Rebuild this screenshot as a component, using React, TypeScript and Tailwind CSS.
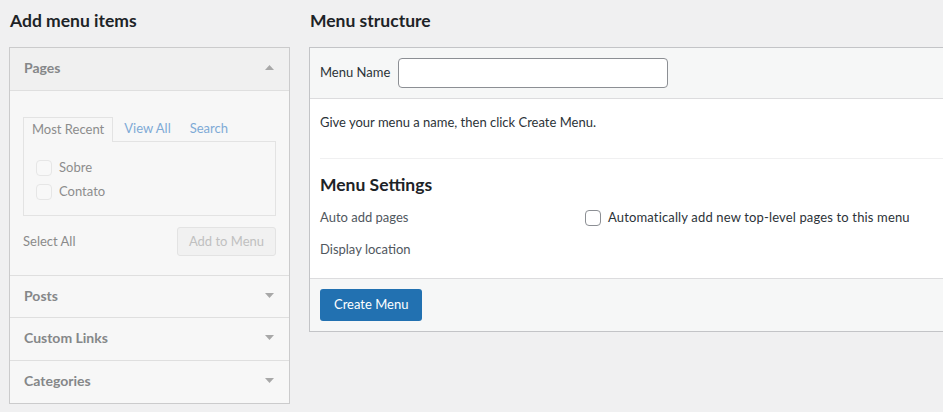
const font = { fontFamily: "Lato, 'Noto Sans', sans-serif" };

const sections = [
  { name: "Posts", h: "h-[42px]" },
  { name: "Custom Links", h: "h-[43px]" },
  { name: "Categories", h: "h-[43px]" },
];

const Arrow = ({ up }: { up?: boolean }) => (
  <svg width="9" height="5" viewBox="0 0 9 5" className="fill-[#a8a8a8]">
    {up ? <path d="M0 5 L4.5 0 L9 5 Z" /> : <path d="M0 0 L9 0 L4.5 5 Z" />}
  </svg>
);

const AddMenuItems = () => (
  <div className="w-[281px] shrink-0">
    <h2 className="h-[47px] pt-[12px] text-[17.5px] font-bold text-[#1d2327] leading-[18px] ml-px">Add menu items</h2>
    <div className="border border-[#cbcbcc] bg-[#f7f7f7]">
      <div className="h-[43px] flex items-center justify-between px-[14px] pb-[3px] bg-[#f0f0f0] border-b border-[#dfdfdf]">
        <span className="text-[14px] font-bold text-[#858789]">Pages</span>
        <span className="mr-[1px]"><Arrow up /></span>
      </div>
      <div className="px-[13px] pt-[26px] pb-[19px]">
        <div className="flex items-end text-[13px] h-[24px]">
          <div className="h-[25px] px-[8px] flex items-center border border-b-0 border-[#e3e3e3] bg-[#f7f7f7] text-[#8c8c8c] relative top-px">Most Recent</div>
          <span className="text-[#7eaad6] ml-[11px] h-[24px] flex items-center">View All</span>
          <span className="text-[#7eaad6] ml-[19px] h-[24px] flex items-center">Search</span>
        </div>
        <div className="border border-[#e3e3e3] h-[75px] pt-[14px] px-[12px]">
          {["Sobre", "Contato"].map((p) => (
            <div key={p} className="flex items-center h-[24px] text-[13px] text-[#8d8d8d]">
              <span className="w-[16px] h-[16px] rounded-[4px] border border-[#e6e6e6] bg-[#f8f8f8] mr-[7px]" />
              {p}
            </div>
          ))}
        </div>
        <div className="flex items-center justify-between mt-[11px]">
          <span className="text-[13px] text-[#8a8a8a]">Select All</span>
          <span className="h-[29px] px-[11px] flex items-center rounded-[3px] border border-[#e3e3e3] bg-[#f1f1f1] text-[13px] text-[#c0c0c0]">Add to Menu</span>
        </div>
      </div>
      {sections.map((s) => (
        <div key={s.name} className={`${s.h} border-t border-[#dfdfdf] flex items-center justify-between px-[14px] pb-[3px]`}>
          <span className="text-[14px] font-bold text-[#858789]">{s.name}</span>
          <span className="mr-[1px]"><Arrow /></span>
        </div>
      ))}
    </div>
  </div>
);

const MenuStructure = () => (
  <div className="flex-1 min-w-0 ml-[19px]">
    <h2 className="h-[47px] pt-[12px] text-[17.5px] font-bold text-[#1d2327] leading-[18px] ml-px">Menu structure</h2>
    <div className="border border-r-0 border-[#c3c4c7] bg-white w-[700px]">
      <div className="h-[51px] bg-[#f6f7f7] border-b border-[#dcdcde] flex items-center px-[10px]">
        <span className="text-[13px] text-[#2c3338] mr-[8px]">Menu Name</span>
        <input className="w-[270px] h-[30px] rounded-[4px] border border-[#8c8f94] bg-white outline-none" />
      </div>
      <div className="px-[10px]">
        <p className="text-[13px] text-[#2c3338] pt-[13px] pb-[26px] leading-[20px]">Give your menu a name, then click Create Menu.</p>
        <div className="border-t border-[#f0f0f1] pt-[15px] pb-[18px]">
          <h3 className="text-[17.5px] font-bold text-[#1d2327] leading-[22px]">Menu Settings</h3>
          <div className="flex items-center mt-[13px] h-[18px]">
            <span className="w-[265px] text-[13px] text-[#50575e]">Auto add pages</span>
            <span className="w-[16px] h-[16px] rounded-[4px] border border-[#8c8f94] bg-white mr-[7px]" />
            <span className="text-[13px] text-[#2c3338] tracking-[0.15px]">Automatically add new top-level pages to this menu</span>
          </div>
          <div className="text-[13px] text-[#50575e] mt-[13px]">Display location</div>
        </div>
      </div>
      <div className="h-[53px] bg-[#f6f7f7] border-t border-[#dcdcde] flex items-center px-[10px]">
        <button className="h-[32px] px-[14px] rounded-[3px] bg-[#2271b1] text-white text-[13px]">Create Menu</button>
      </div>
    </div>
  </div>
);

export default function App() {
  return (
    <div className="w-[943px] h-[412px] overflow-hidden bg-[#f0f0f1] flex pl-[9px]" style={font}>
      <AddMenuItems />
      <MenuStructure />
    </div>
  );
}
